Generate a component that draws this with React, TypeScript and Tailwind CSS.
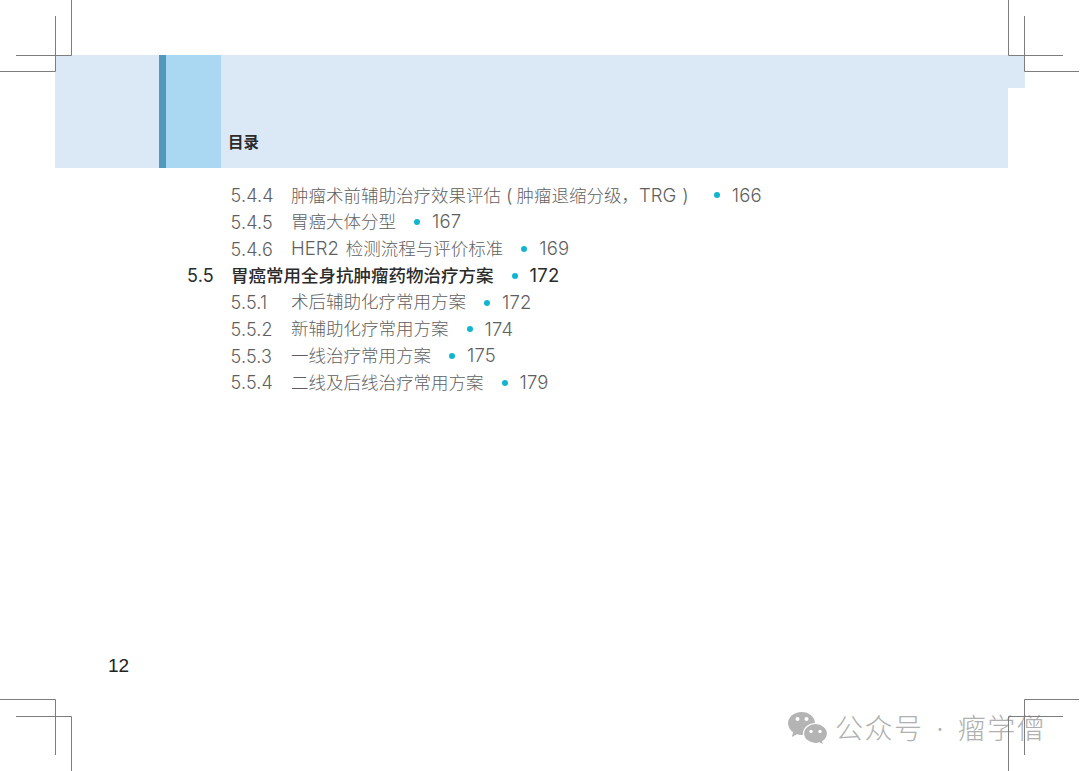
import type { ReactNode } from "react";

const font = "font-['Inter','Noto_Sans_CJK_SC',sans-serif]";

function L({ children }: { children: ReactNode }) {
  return <span className="text-[18.500px]">{children}</span>;
}

type Row = { num: string; title: ReactNode; page: string; bold?: boolean };

const rows: Row[] = [
  {
    num: "5.4.4",
    title: (
      <>
        肿瘤术前辅助治疗效果评估
        <span className="ml-[5px] mr-[4px]"><L>(</L></span>
        肿瘤退缩分级，
        <L>TRG</L>
        <span className="ml-[6px] mr-[7px]"><L>)</L></span>
      </>
    ),
    page: "166",
  },
  { num: "5.4.5", title: "胃癌大体分型", page: "167" },
  { num: "5.4.6", title: <><L>HER2</L><span className="ml-[7px]">检测流程与评价标准</span></>, page: "169" },
  { num: "5.5", title: "胃癌常用全身抗肿瘤药物治疗方案", page: "172", bold: true },
  { num: "5.5.1", title: "术后辅助化疗常用方案", page: "172" },
  { num: "5.5.2", title: "新辅助化疗常用方案", page: "174" },
  { num: "5.5.3", title: "一线治疗常用方案", page: "175" },
  { num: "5.5.4", title: "二线及后线治疗常用方案", page: "179" },
];

function CropMarks() {
  const lines = [
    "M71.5 0V55.5H16", "M55.5 16V71.5H0",
    "M1008.5 0V55.5H1063", "M1024.5 16V71.5H1079",
    "M0 699.5H55.5V755", "M16 716.5H71.5V771",
    "M1079 699.5H1024.5V755", "M1063 716.5H1008.5V771",
  ];
  return (
    <svg className="absolute inset-0 pointer-events-none" width="1080" height="771" fill="none" stroke="#7d7d7d" strokeWidth="1">
      {lines.map((d) => <path key={d} d={d} />)}
    </svg>
  );
}

function WeChat() {
  return (
    <svg width="40" height="35" viewBox="0 0 40 35" fill="#b4b4b4">
      <path d="M13.500 0C6 0 0 5 0 11.300c0 3.600 2 6.800 5.100 8.900L3.800 25l5.100-2.700c1.500.4 3 .6 4.600.6 7.500 0 13.500-5.200 13.500-11.600S21 0 13.500 0z" />
      <path d="M39.500 21.500c0-5.500-5.400-10-12-10s-12 4.500-12 10 5.400 10 12 10c1.400 0 2.800-.2 4-.6l4.300 2.400-1.100-3.800c2.900-1.900 4.800-4.800 4.800-8z" stroke="#ffffff" strokeWidth="1.200" />
      <circle cx="9.500" cy="7" r="2" fill="#fff" /><circle cx="18.500" cy="7" r="2" fill="#fff" />
      <circle cx="23" cy="19.500" r="1.700" fill="#fff" /><circle cx="32" cy="19.500" r="1.700" fill="#fff" />
    </svg>
  );
}

export default function App() {
  return (
    <div className={`relative w-[1080px] h-[771px] bg-white overflow-hidden ${font}`}>
      <div className="flex flex-col pt-[55px] pl-[55px] h-full">
        <div className="flex items-start">
          <div className="flex w-[953px] h-[113px] bg-[#dbe9f6]">
            <div className="w-[104px]" />
            <div className="w-[7px] bg-[#5198bb]" />
            <div className="w-[55px] bg-[#aad8f3]" />
            <div className="flex items-end pl-[7px] pb-[15px]">
              <span className="text-[15.500px] leading-[20px] font-bold text-[#2b2b2b]">目录</span>
            </div>
          </div>
          <div className="w-[17px] h-[33px] bg-[#dbe9f6]" />
        </div>

        <div className="flex flex-col pt-[14px] pl-[132px]">
          {rows.map((r) => (
            <div key={r.num} className={`flex items-center h-[26.800px] text-[17.500px] font-light whitespace-nowrap ${r.bold ? "text-[#2b2b2b]" : "text-[#5f5f5f]"}`}>
              <span className={`text-[18px] tracking-[0.2px] ${r.bold ? "w-[44px] font-normal" : "w-[104px] pl-[43.500px]"}`}>{r.num}</span>
              <span className={r.bold ? "font-medium" : "font-light"}>{r.title}</span>
              <span className="w-[6px] h-[6px] rounded-full bg-[#12b5d0] ml-[18px]" />
              <span className={`ml-[12px] text-[18.500px] tracking-[0.2px] ${r.bold ? "font-normal" : ""}`}>{r.page}</span>
            </div>
          ))}
        </div>

        <div className="mt-auto pl-[53px] pb-[94px] font-['Liberation_Sans',sans-serif] text-[19px] leading-[22px] font-normal text-[#222222]">12</div>
      </div>

      <div className="absolute left-[788px] top-[712px] flex items-start gap-[7px]">
        <WeChat />
        <span className="text-[28px] leading-[34px] font-light text-[#b0b0b0] tracking-[1.500px]">公众号<span className="mx-[3px]"> · </span>瘤学僧</span>
      </div>

      <CropMarks />
    </div>
  );
}
